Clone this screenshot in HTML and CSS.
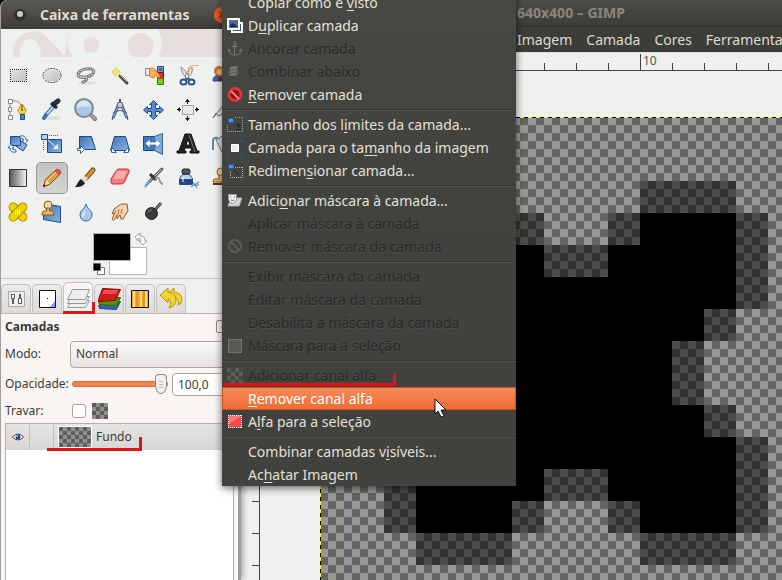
FILE: index.html
```html
<!DOCTYPE html>
<html lang="pt-BR">
<head>
<meta charset="utf-8">
<title>Caixa de ferramentas</title>
<link rel="stylesheet" href="styles.css">
</head>
<body>
<svg class="defs" aria-hidden="true">
  <defs>
    <linearGradient id="blue" x1="0" y1="0" x2="1" y2="1"><stop offset="0" stop-color="#3f74b8"/><stop offset="1" stop-color="#8ab4e2"/></linearGradient>
    <linearGradient id="grey" x1="0" y1="0" x2="1" y2="1"><stop offset="0" stop-color="#e4e8e6"/><stop offset="1" stop-color="#b9bdbb"/></linearGradient>
    <linearGradient id="ramp"><stop offset="0" stop-color="#555"/><stop offset="1" stop-color="#f4f4f4"/></linearGradient>
    <pattern id="check4" width="8" height="8" patternUnits="userSpaceOnUse"><path fill="#8f8f8d" d="M0 0h8v8H0z"/><path fill="#5d5d5b" d="M0 0h4v4H0zM4 4h4v4H4z"/></pattern>
  </defs>
</svg>
<div class="desktop">
  <section class="toolbox">
    <header class="titlebar">
      <svg width="16" height="16"><circle cx="8" cy="8" r="6" fill="#32312e"/><circle cx="8" cy="7" r="3" fill="#cfccc4"/></svg>
      <h1>Caixa de ferramentas</h1>
      <button class="close" aria-label="Fechar">×</button>
    </header>
    <svg class="wilber" viewBox="0 0 236 28" preserveAspectRatio="xMinYMin slice">
      <path fill="#e6dfde" d="M12 28V21C13 11 21 2 33 2c12 0 18 9 25 15 5-3 8-10 9-15l3-2h166v28z"/>
      <path fill="#eff1ef" d="M19 28c-1-9 3-18 10-18s12 9 10 18zM36 2c11 2 20 14 30 0l-3 26c-13-3-18-15-27-26"/>
      <path fill="#e6dfde" d="M32 2c13-1 22 18 34 26H48C42 17 36 8 32 2"/>
      <circle cx="89" cy="12" r="23" fill="#eff1ef"/><circle cx="90" cy="16" r="8" fill="#e6dfde"/>
      <circle cx="133" cy="15" r="27" fill="#eff1ef"/><circle cx="139" cy="17" r="13" fill="#e6dfde"/>
    </svg>
    <div class="tools">
      <button aria-label="Seleção retangular"><svg viewBox="0 0 24 24" shape-rendering="crispEdges"><path fill="url(#grey)" stroke="#fff" d="M4.500 5.500h16v12h-16z"/><path fill="none" stroke="#111" stroke-dasharray="1 1" d="M4 5.500h17M4 17.500h17M4.500 5v13M20.500 5v13"/></svg></button>
      <button aria-label="Seleção elíptica"><svg viewBox="0 0 24 24"><ellipse cx="12" cy="11.500" rx="9" ry="7" fill="url(#grey)" stroke="#fff" stroke-width="2"/><ellipse cx="12" cy="11.500" rx="9" ry="7" fill="none" stroke="#222" stroke-dasharray="2 1"/></svg></button>
      <button aria-label="Seleção livre"><svg viewBox="0 0 24 24"><ellipse cx="13" cy="19" rx="9" ry="2" fill="#0001"/><g fill="none" stroke="#777" stroke-width="3"><ellipse cx="12" cy="9" rx="8" ry="4" transform="rotate(-13 12 9)"/><path d="M5 11c-2 3 5 1 7 3s-3 4-4 5"/></g><g fill="none" stroke="#ddd" stroke-dasharray="2 1"><ellipse cx="12" cy="9" rx="8" ry="4" transform="rotate(-13 12 9)"/><path d="M5 11c-2 3 5 1 7 3s-3 4-4 5"/></g></svg></button>
      <button aria-label="Seleção contígua"><svg viewBox="0 0 24 24"><circle cx="8" cy="8" r="4" fill="#f6dc6a" opacity=".6"/><path fill="#fbeb8c" stroke="#e8c84a" stroke-width=".5" d="M8 3l1 4 4 1-4 1-1 4-1-4-4-1 4-1z"/><path stroke="#45443f" stroke-width="3" stroke-linecap="round" d="M12 12l7 7"/><path stroke="#b4b3a6" d="M12 11l7 7"/></svg></button>
      <button aria-label="Seleção por cor"><svg viewBox="0 0 24 24"><path fill="#729fcf" stroke="#204a87" d="M15.500 2.500h6v6h-6z"/><path fill="#3465a4" d="M17 4h3v3h-3z"/><path fill="#ef2929" stroke="#a40000" d="M15.500 8.500h6v6h-6z"/><path fill="#73d216" stroke="#3c7a06" d="M15.500 14.500h6v6h-6z"/><path fill="#fbb45c" stroke="#d57a0c" d="M7 5c3-2 7 0 8 3l3 4-1 2-4-3-1 3-3-1-3-2z"/><path fill="#eee" stroke="#888" d="M3.500 4.500h4v7h-4z"/></svg></button>
      <button aria-label="Tesoura"><svg viewBox="0 0 24 24"><path fill="#ddd" stroke="#777" stroke-width=".8" d="M5 3c0 5 3 9 7 12l1-2C11 9 8 5 5 3zM16 3c1 5-1 9-6 12l-1-2c1-4 4-8 7-10z"/><g fill="none" stroke="#2a5596" stroke-width="2"><ellipse cx="7.500" cy="18" rx="3" ry="2.500"/><ellipse cx="15.500" cy="18" rx="3" ry="2.500"/></g><path stroke="#3465a4" stroke-width="2" d="M9 15h5"/><path fill="none" stroke="#d9902c" stroke-dasharray="2 1" d="M12.500 11V5q0-3 3-3.500H23"/></svg></button>
      <button aria-label="Seleção de frente"><svg viewBox="0 0 24 24"><path fill="#3c68ac" stroke="#254b86" d="M3 17q0-5 5-6h9v6z"/><circle cx="9" cy="7" r="5" fill="#c27c23"/><circle cx="10" cy="8" r="3" fill="#f3b469"/><path fill="#7c2630" d="M8 13h6v4H8z"/></svg></button>

      <button aria-label="Vetores"><svg viewBox="0 0 24 24"><path fill="none" stroke="#888" d="M4 4c6-3 11 0 12 6M4 3v18"/><g fill="#fff" stroke="#888"><path d="M2.500 1.500h4v4h-4zM2.500 17.500h4v4h-4zM2.500 9.500h3v4h-3z"/></g><path fill="#f6dc4c" stroke="#b18609" d="M16 6l4 6c0 2-2 4-2 4h-4s-2-2-2-4z"/><circle cx="16" cy="12" r="1" fill="#765b00"/><path stroke="#765b00" d="M16 7v5"/><path fill="#4a80c4" stroke="#204a87" d="M14.500 16.500h4v5h-4z"/></svg></button>
      <button aria-label="Seletor de cores"><svg viewBox="0 0 24 24"><ellipse cx="13" cy="20" rx="8" ry="2" fill="#0001"/><path stroke="#3f6fae" stroke-width="4" stroke-linecap="round" d="M13 9l-7 8-2 3"/><path stroke="#b9d2f0" stroke-width="2" d="M13 9l-6 7"/><path stroke="#28313f" stroke-width="5" stroke-linecap="round" d="M14 6l4-3"/><path stroke="#1d2637" stroke-width="3" d="M11 5l6 5"/></svg></button>
      <button aria-label="Zoom"><svg viewBox="0 0 24 24"><path stroke="#777" stroke-width="4" stroke-linecap="round" d="M16 16l5 5"/><path stroke="#ddd" stroke-dasharray="1 1" stroke-width="2" d="M16 16l5 5"/><circle cx="10" cy="10" r="9" fill="#a9c8ec" stroke="#85888a" stroke-width="2"/><path fill="#d6e5f6" d="M3 10a7 7 0 0114-1q-7-2-14 1"/></svg></button>
      <button aria-label="Medida"><svg viewBox="0 0 24 24"><path fill="none" stroke="#3b6ba8" stroke-width="3" d="M10 8L5 20M14 8l5 12"/><path fill="none" stroke="#9cbbe2" d="M10 9L5 19M14 9l5 10"/><path fill="none" stroke="#555" d="M5 15q7-5 14 0"/><path stroke="#555" stroke-width="2" d="M12 1v5"/><circle cx="12" cy="7" r="3" fill="#ccc" stroke="#555"/><path stroke="#444" d="M4 22l1-3M20 22l-1-3"/></svg></button>
      <button aria-label="Mover"><svg viewBox="0 0 24 24"><path fill="#568bce" stroke="#204a87" d="M11.500 2.500l4 4h-2v4h4v-2l4 3.500-4 3.500v-2h-4v4h2l-4 4-4-4h2v-4h-4v2l-4-3.500 4-3.500v2h4v-4h-2z"/></svg></button>
      <button aria-label="Alinhamento"><svg viewBox="0 0 24 24"><path fill="#e9ebe9" stroke="#a3a5a3" d="M6.500 7.500h11v9h-11z"/><path stroke="#111" d="M11.500 1v5M11.500 18v5M1 11.500h4M19 11.500h4"/><path fill="#111" d="M9 4l2.500-3L14 4zM9 20l2.500 3 2.500-3zM4 9l-3 2.500L4 14zM20 9l3 2.500L20 14z"/></svg></button>
      <button aria-label="Cortar"><svg viewBox="0 0 24 24"><path fill="#e2e3e0" stroke="#666" d="M3 20L15 5v10l-7 3-2-3z"/></svg></button>

      <button aria-label="Rotacionar"><svg viewBox="0 0 24 24"><path fill="#87aede" stroke="#204a87" d="M4 10l13 9 4-6-11-7z"/><path fill="url(#blue)" stroke="#204a87" d="M4.500 4.500h10v9h-10z"/><path fill="#fff" stroke="#3465a4" d="M14 4q6-1 6 4h2l-3 4-3-4h2q0-2-4-2zM10 20q-6 1-6-4H2l3-4 3 4H6q0 2 4 2z"/></svg></button>
      <button aria-label="Redimensionar"><svg viewBox="0 0 24 24"><path fill="url(#blue)" stroke="#204a87" d="M7.500 7.500h14v13h-14z"/><path fill="none" stroke="#3465a4" stroke-dasharray="1 1" d="M9 3.500h9M3.500 9v10"/><path fill="#b7d0ef" stroke="#204a87" d="M1.500 2.500h6v5h-6z"/><path stroke="#fff" d="M8 8l9 8"/><path fill="#fff" d="M18 12v5h-5z"/></svg></button>
      <button aria-label="Inclinar"><svg viewBox="0 0 24 24"><path fill="url(#blue)" stroke="#204a87" d="M5.500 4.500h12l4 13h-16z"/><path fill="#fff" stroke="#3465a4" d="M3.500 16.500h3v-3l4 4-4 4v-3h-3z"/></svg></button>
      <button aria-label="Perspectiva"><svg viewBox="0 0 24 24"><path fill="url(#blue)" stroke="#204a87" d="M6.500 4.500h11l4 14h-19z"/><g fill="#fff" stroke="#3465a4"><path d="M3.500 15.500l5 5h-5zM20.500 15.500l-5 5h5z"/></g></svg></button>
      <button aria-label="Espelhar"><svg viewBox="0 0 24 24"><path fill="#4378bb" stroke="#204a87" d="M1.500 4.500h11v14h-11z"/><path fill="#82abdc" stroke="#3465a4" d="M12.500 4.500l8-3v21l-8-4z"/><path fill="#fff" stroke="#3465a4" stroke-width=".7" d="M3 11.500L8 7v3h6V7l5 4.500-5 4.500v-3H8v3z"/></svg></button>
      <button aria-label="Texto"><svg viewBox="0 0 24 24"><path fill="#222" stroke="#111" fill-rule="evenodd" d="M9 2h6l6 17h2v2h-9v-2h2l-1-3H9l-1 3h2v2H1v-2h2zM12 7l-2 6h4z"/><path stroke="#777" d="M13 3l6 17"/></svg></button>
      <button aria-label="Preenchimento"><svg viewBox="0 0 24 24"><path fill="#ddd" stroke="#777" d="M6 8l8-5 6 10-8 7z"/><path fill="none" stroke="#5e83b4" stroke-width="2" d="M3 18V8q1-3 5-2"/></svg></button>

      <button aria-label="Degradê"><svg viewBox="0 0 24 24"><path fill="url(#ramp)" stroke="#333" d="M3.500 3.500h17v17h-17z"/></svg></button>
      <button class="selected" aria-label="Lápis"><svg viewBox="0 0 24 24"><path fill="#e0a04c" stroke="#87510c" d="M3.500 20.500l2-7 11-10 4 4-11 11z"/><path fill="#f6d6a0" d="M4.500 19.500l2-6 3 4z"/><path fill="#e55" stroke="#933" stroke-width=".6" d="M15 5l2-2q4 0 4 4l-2 2z"/><path fill="#222" d="M3 21l1-3 2 2z"/><path stroke="#ffd48d" d="M8 14l8-8"/></svg></button>
      <button aria-label="Pincel"><svg viewBox="0 0 24 24"><path stroke="#81490e" stroke-width="5" stroke-linecap="round" d="M19 4l-7 8"/><path stroke="#d6903d" stroke-width="3" stroke-linecap="round" d="M19 4l-6 7"/><path stroke="#ddd" stroke-width="5" d="M12 11l-3 4"/><path fill="#222" d="M7 13l4 4c-2 4-6 4-10 4 2-2 3-6 6-8"/></svg></button>
      <button aria-label="Borracha"><svg viewBox="0 0 24 24"><path fill="#f27c7c" stroke="#cf2f32" d="M3 13l5-8q1-2 3-2h8q3 0 2 3l-4 9q-1 3-4 3H5q-2 0-2-2z"/><path fill="#f8aaaa" d="M5 13l4-8h10l-4 8z"/></svg></button>
      <button aria-label="Aerógrafo"><svg viewBox="0 0 24 24"><path stroke="#555" stroke-width="3" stroke-linecap="round" d="M20 3L8 15"/><path stroke="#ccc" d="M20 3L7 16"/><path stroke="#333" stroke-width="3" d="M8 8l6 6"/><path fill="none" stroke="#999" stroke-width="2" d="M13 13c6-5 3 5 8 5"/><path fill="#6897d4" d="M7 14l2 2-6 6q-2-2 4-8"/></svg></button>
      <button aria-label="Tinta"><svg viewBox="0 0 24 24"><rect x="6" y="3" width="8" height="5" rx="2" fill="#555" stroke="#222"/><path fill="#bcd3ee" stroke="#274d83" d="M6.500 8.500h7l3 4v6h-13v-6z"/><path fill="#204a87" d="M4 13h12v5H4z"/><path stroke="#fff" d="M7 11v5"/><path stroke="#3d6ba7" d="M15 21l8-5M17 16l4 6M20 19h3"/></svg></button>
      <button aria-label="Clonar"><svg viewBox="0 0 24 24"><circle cx="11" cy="6" r="4" fill="#f0d6a1" stroke="#8f5902"/><path fill="#e4b868" stroke="#8f5902" d="M9 9v4H5q-2 0-2 3h17v-3h-7V9z"/><path fill="#513712" d="M3 17h17v2H3z"/></svg></button>

      <button aria-label="Restauração"><svg viewBox="0 0 24 24"><g stroke="#b08c00" fill="#edd400"><rect x="1" y="8" width="22" height="8" rx="4" transform="rotate(45 12 12)"/><rect x="1" y="8" width="22" height="8" rx="4" transform="rotate(-45 12 12)"/></g><path stroke="#fff29a" stroke-width="5" stroke-dasharray="1 1" d="M9 12h6"/></svg></button>
      <button aria-label="Clonar em perspectiva"><svg viewBox="0 0 24 24"><path fill="url(#blue)" stroke="#204a87" d="M3.500 13.500L12 5l8.500 1.500v16l-17-3z"/><circle cx="8" cy="5" r="4" fill="#f0d6a1" stroke="#8f5902"/><path fill="#e4b868" stroke="#8f5902" d="M6.500 8v3H4q-2 0-2 4h12q0-4-2-4H9.500V8z"/></svg></button>
      <button aria-label="Desfocar"><svg viewBox="0 0 24 24"><path fill="#a9c7ec" stroke="#3465a4" d="M12 4c1 5 6 6 6 11a6 6 0 01-12 0c0-5 5-6 6-11"/><path fill="#deebf9" d="M11 9c0 4-4 4-3 8 2 1 4-3 3-8"/></svg></button>
      <button aria-label="Borrar"><svg viewBox="0 0 24 24"><path fill="#f5d3b2" stroke="#9b5a25" d="M19 4l-6 0-7 5-2 5 3-1-3 6q1 3 3 0l2-4v4l3-4 1 4q3 1 3-2l4-6z"/><path fill="none" stroke="#bb7538" d="M8 10l-2 5M11 9l-1 6M14 9l-1 5"/></svg></button>
      <button aria-label="Subexposição"><svg viewBox="0 0 24 24"><path stroke="#444" stroke-width="3" d="M12 11l7-8"/><path stroke="#999" d="M13 10l6-7"/><circle cx="9.500" cy="13.500" r="6" fill="#3a3a3a" stroke="#222"/><path fill="#666" d="M5 13q1-4 5-4-1 3-5 4"/></svg></button>
    </div>
    <button class="colours" aria-label="Cores de frente e fundo"><svg width="56" height="44" viewBox="0 0 56 44"><path fill="#fff" stroke="#b9b3b1" d="M16.500 14.500h37v27h-37z"/><path fill="#000" stroke="#b9b3b1" d="M.5.5h37v27H.5z"/><path fill="#fff" stroke="#777" d="M4.500 34.500h7v7h-7z"/><path fill="#000" stroke="#666" d="M.5 30.500h7v7h-7z"/><path fill="#fff" stroke="#888" stroke-width=".8" d="M42 4l5-4v3q5 0 5 5h2l-4 4-4-4h2q0-3-3-3v3z"/></svg></button>
    <div class="dock">
      <nav class="tabs">
        <button aria-label="Opções"><svg viewBox="0 0 24 24"><path fill="#eee" stroke="#aaa" d="M4.500 4.500h16v15h-16z"/><path fill="#fff" stroke="#555" d="M7.500 7.500h3v4h-3zM14.500 11.500h3v5h-3z"/><path stroke="#555" stroke-width="2" d="M9 12v5M16 7v4"/></svg></button>
        <button aria-label="Pincéis"><svg viewBox="0 0 24 24"><path fill="#fff" stroke="#111" d="M4.500 3.500h16v17h-16z"/><path fill="#89f" d="M20 14v6h-5z"/><path d="M12 11h1v1h-1z"/></svg></button>
        <button class="active" aria-label="Camadas"><svg viewBox="0 0 24 24"><g fill="#eee" stroke="#999"><path d="M1.500 21.500l4-7h18l-4 7z"/><path d="M1.500 17.500l4-7h18l-4 7z"/><path d="M1.500 13.500l5-10h17l-4 10z"/></g></svg></button>
        <button aria-label="Canais"><svg viewBox="0 0 24 24"><path fill="#3465a4" stroke="#204a87" d="M1.500 18.500l4-4h18l-4 8-17-1z"/><path fill="#4e9a06" stroke="#2e6b00" d="M1.500 14.500l4-4h18l-4 8-17-1z"/><path fill="#cc1c1c" stroke="#900" d="M1.500 12.500l4-11 18 1-5 11-17 1z"/><path fill="#e85050" d="M7 3h14l-2 4H5z"/></svg></button>
        <button aria-label="Vetores"><svg viewBox="0 0 24 24"><path fill="#f6a832" stroke="#111" d="M3.500 3.500h17v17h-17z"/><path stroke="#ffdd83" stroke-width="2" d="M6 4v16M13 4v16M18 4v16"/><path stroke="#e47900" d="M9 4v16M16 4v16"/></svg></button>
        <button aria-label="Histórico"><svg viewBox="0 0 24 24"><g fill="#f3d332" stroke="#b59308"><path d="M7 8l8-7v4q8 1 8 8 0 4-4 5 2-7-4-7v4z"/><path d="M1 8l8-7v4q8 1 8 8 0 6-7 8 4-7-1-9v4z"/></g></svg></button>
      </nav>
      <div class="panel">
        <div class="row heading"><h2>Camadas</h2><button class="fold" aria-label="Menu">◂</button></div>
        <div class="row"><label for="mode">Modo:</label><select id="mode"><option>Normal</option></select></div>
        <div class="row"><label for="op">Opacidade:</label><input id="op" type="range" value="100"><input class="num" type="text" value="100,0" aria-label="Opacidade em porcentagem"></div>
        <div class="row lock"><label for="lock">Travar:</label><input id="lock" type="checkbox"><svg width="16" height="16"><path fill="url(#check4)" d="M0 0h16v16H0z"/></svg></div>
        <div class="layers">
          <div class="layer">
            <span class="eye"><svg width="12" height="10"><path fill="#fff" stroke="#444" d="M.5 5Q6-1 11.500 5 6 11 .5 5"/><circle cx="6" cy="5" r="2.500" fill="#204a87"/><circle cx="5" cy="4" r="1" fill="#9bf"/></svg></span><span class="chain"></span>
            <svg class="thumb" width="32" height="20"><path fill="url(#check4)" d="M0 0h32v20H0z"/></svg>
            <span>Fundo</span>
          </div>
        </div>
      </div>
    </div>
  </section>

  <section class="image-window">
    <header class="image-title">640x400 – GIMP</header>
    <nav class="menubar"><a href="#">Imagem</a><a href="#">Camada</a><a href="#">Cores</a><a href="#">Ferramentas</a></nav>
    <div class="workspace">
      <div class="corner"></div>
      <svg class="ruler-h"><defs><pattern id="th" x="28" width="32" height="18" patternUnits="userSpaceOnUse"><path fill="#444" d="M0 10h1v8H0z"/></pattern></defs><rect width="100%" height="18" fill="url(#th)"/><path fill="#444" d="M380 1h1v17h-1z"/><text x="383" y="12">10</text></svg>
      <svg class="ruler-v"><defs><pattern id="tv" y="14" width="19" height="32" patternUnits="userSpaceOnUse"><path fill="#444" d="M11 0h8v1h-8z"/></pattern></defs><rect width="19" height="100%" fill="url(#tv)"/></svg>
      <div class="viewport">
        <svg class="canvas">
          <defs>
            <pattern id="check8" width="16" height="16" patternUnits="userSpaceOnUse"><path fill="#646462" d="M0 0h16v16H0z"/><path fill="#989896" d="M0 0h8v8H0zM8 8h8v8H8z"/></pattern>
          </defs>
          <rect width="100%" height="100%" fill="url(#check8)"/>
          <!-- soft edge of the brush stroke -->
          <path fill="#000" fill-opacity=".5" d="M96 64h96v32h32v32h64V96h32V64h96v32h32v96h-32v32h-32v64h32v32h32v96h-32v32h-96v-32h-32v-32h-64v32h-32v32H96v-32H64V96h32z"/>
          <path d="M96 96h96v32h32v32h64v-32h32V96h96v96h-32v32h-32v64h32v32h32v96h-96v-32h-32v-32h-64v32h-32v32H96z"/>
          <path stroke="#000" d="M0 .5h1200M.5 0v1200"/><path stroke="#ff0" stroke-dasharray="4 4" d="M0 .5h1200M.5 0v1200"/>
        </svg>
      </div>
    </div>
  </section>

  <div class="menu" role="menu">
    <button role="menuitem"><i></i>Copiar como é <u>v</u>isto</button>
    <button role="menuitem"><svg viewBox="0 0 16 16"><path fill="#3b4f7c" stroke="#fff" stroke-width="2" d="M5 5h10v9H5z"/><path fill="#4c6ba2" stroke="#fff" stroke-width="2" d="M1 1h11v10H1z"/><path fill="#1b2d50" d="M3 7l3-2 5 4H3z"/></svg>D<u>u</u>plicar camada</button>
    <button role="menuitem" disabled><svg viewBox="0 0 16 16"><g fill="none" stroke="#777773"><circle cx="8" cy="2.500" r="1.500"/><path d="M7.500 4v10M5 5.500h6M2 9q0 5 6 5t6-5M1 10l1-2 2 2M12 10l2-2 1 2"/></g></svg>Ancorar camada</button>
    <button role="menuitem" disabled><svg viewBox="0 0 16 16"><g fill="#777773" stroke="#444440" stroke-width=".6"><path d="M1 12l3-4h8l-3 4z"/><path d="M1 9l3-4h8L9 9z"/><path d="M1 6l3-4h8L9 6z"/></g></svg>Combinar abaixo</button>
    <button role="menuitem"><svg viewBox="0 0 16 16"><circle cx="8" cy="7.500" r="6" fill="#8a1414" stroke="#d9383b" stroke-width="3"/><path stroke="#f08080" stroke-width="2" d="M4 4l8 8"/></svg><u>R</u>emover camada</button>
    <hr>
    <button role="menuitem"><svg viewBox="0 0 16 16" shape-rendering="crispEdges"><path fill="none" stroke="#999" stroke-dasharray="1 1" d="M8 .5h8M15.500 1v14M0 14.500h16M.5 8v6"/><path fill="#5b92dc" stroke="#245ba8" d="M1.500 1.500h5v4h-5z"/><path stroke="#222" d="M9 8.500h5M11.500 6v5M9 12.500h5"/></svg>Tamanho dos l<u>i</u>mites da camada...</button>
    <button role="menuitem"><svg viewBox="0 0 16 16"><path fill="#eee" stroke="#fff" d="M4.500 4.500h7v7h-7z"/><path fill="#245ba8" d="M0 0h3L0 3zM16 0h-3l3 3zM0 16h3l-3-3zM16 16h-3l3-3z"/></svg>Camada para o ta<u>m</u>anho da imagem</button>
    <button role="menuitem"><svg viewBox="0 0 16 16" shape-rendering="crispEdges"><path fill="none" stroke="#bbb" stroke-dasharray="1 1" d="M8 4.500h8M15.500 4v11M3 14.500h13M3.500 8v7"/><path fill="#5b92dc" stroke="#245ba8" d="M1.500 1.500h5v4h-5z"/><path stroke="#222" d="M7 7l5 5"/></svg>Redimen<u>s</u>ionar camada...</button>
    <hr>
    <button role="menuitem"><svg viewBox="0 0 16 16"><path fill="#d5d5d2" stroke="#aaa" d="M1 13l3-8h11l-3 8z"/><path fill="#eee" stroke="#999" d="M1.500 1.500h8v5q-1 4-4 4t-4-4z"/><path fill="none" stroke="#666" d="M3 4h1M7 4h1M4 7q2 1 3 0"/></svg>Adici<u>o</u>nar máscara à camada...</button>
    <button role="menuitem" disabled><i></i>Aplicar máscara à camada</button>
    <button role="menuitem" disabled><svg viewBox="0 0 16 16"><circle cx="8" cy="7" r="6" fill="none" stroke="#5c5c58" stroke-width="2"/><path stroke="#5c5c58" stroke-width="2" d="M4 3l8 8"/></svg>Remover máscara da camada</button>
    <hr>
    <button role="menuitem" disabled><i></i>Exibir máscara da camada</button>
    <button role="menuitem" disabled><i></i>Editar máscara da camada</button>
    <button role="menuitem" disabled><i></i>Desabilita a máscara da camada</button>
    <button role="menuitem" disabled><svg viewBox="0 0 16 16" shape-rendering="crispEdges"><path fill="#585855" d="M1 1h14v14H1z"/><path stroke="#888884" stroke-dasharray="1 1" d="M1 1.500h14M1 14.500h14M1.500 1v14M14.500 1v14"/></svg>Máscara para a seleção</button>
    <hr>
    <button role="menuitem" disabled><svg viewBox="0 0 16 16"><path fill="#5b5b58" d="M0 0h16v16H0z"/><path fill="#444441" d="M4 0h4v4H4zM12 0h4v4h-4zM0 4h4v4H0zM8 4h4v4H8zM4 8h4v4H4zM12 8h4v4h-4zM0 12h4v4H0zM8 12h4v4H8z"/></svg>Adicionar canal alfa</button>
    <button role="menuitem" class="hover"><i></i><u>R</u>emover canal alfa</button>
    <button role="menuitem"><svg viewBox="0 0 16 16" shape-rendering="crispEdges"><path fill="#f4484c" d="M1 1h14v13H1z"/><path fill="#f97a7e" d="M2 2h12L2 10z"/><path stroke="#fff" stroke-dasharray="1 1" d="M1 1.500h14M1 13.500h14M1.500 1v13M14.500 1v13"/></svg>A<u>l</u>fa para a seleção</button>
    <hr>
    <button role="menuitem"><i></i>Combinar camadas v<u>i</u>síveis...</button>
    <button role="menuitem"><i></i>Ac<u>h</u>atar Imagem</button>
  </div>

  <div class="mark mark-tab"></div>
  <div class="mark mark-layer"></div>
  <div class="mark mark-alpha"></div>
  <svg class="pointer" width="14" height="21" viewBox="0 0 14 21"><path fill="#fff" stroke="#111" d="M1 1v15l3-3 3 6 3-1-3-6h5z"/></svg>
</div>
</body>
</html>
```
FILE: styles.css
```css
* { box-sizing: border-box; }
body {
  margin: 0;
  background: #000;
  font: 12px/16px "Noto Sans", "Open Sans", sans-serif;
  color: #3c3b37;
}
button, input, select { font: inherit; color: inherit; }
button { padding: 0; border: 0; background: none; }
svg { display: block; flex: none; }
.defs { position: absolute; width: 0; height: 0; }

.desktop {
  position: relative;
  display: flex;
  height: 100vh;
  overflow: hidden;
}

/* toolbox window */
.toolbox {
  position: relative;
  z-index: 1;
  display: flex;
  flex-direction: column;
  flex: none;
  width: 241px;
  border: solid #a39e9c;
  border-width: 0 3px 0 1px;
  border-radius: 7px 0 0 0;
  background: #eff1ef;
  box-shadow: 1px 0 7px rgba(0, 0, 0, 0.4);
  overflow: hidden;
}
.titlebar {
  display: flex;
  align-items: center;
  gap: 12px;
  height: 29px;
  flex: none;
  padding: 0 8px 0 11px;
  background: linear-gradient(#5b5a54, #3c3b37);
  color: #dfdbd2;
}
.titlebar h1 { flex: 1; margin: 0; font-size: 14px; line-height: 20px; white-space: nowrap; }
.close {
  flex: none;
  width: 16px;
  height: 16px;
  border-radius: 50%;
  background: #e95420;
  color: #5b2410;
  font-size: 14px;
  line-height: 16px;
}
.wilber { width: 100%; height: 28px; flex: none; }
.tools {
  display: grid;
  grid-template-columns: repeat(7, 34px);
  grid-auto-rows: 34px;
  padding-top: 2px;
}
.tools button {
  display: grid;
  place-items: center;
  margin: 1px;
  border: 1px solid transparent;
  border-radius: 5px;
}
.tools svg { width: 24px; height: 24px; }
.tools .selected { border-color: #9b9895; background: linear-gradient(#c2c3c1, #d4d5d3); }
.colours { align-self: flex-start; margin: 4px 0 1px 92px; }

.dock {
  display: flex;
  flex-direction: column;
  flex: 1;
  border-top: 1px solid #c9c5c3;
}
.tabs {
  display: flex;
  align-items: flex-end;
  gap: 1px;
  height: 35px;
  border-bottom: 1px solid #bab4b2;
}
.tabs button {
  display: grid;
  place-items: center;
  width: 30px;
  height: 29px;
  border: 1px solid #c3bebc;
  border-bottom: 0;
  border-radius: 5px 5px 0 0;
  background: linear-gradient(#ecebe9, #dddad8);
}
.tabs svg { width: 24px; height: 24px; }
.tabs .active { height: 31px; background: #f9f5f3; }

.panel {
  display: flex;
  flex-direction: column;
  flex: 1;
  padding: 0 4px;
  background: #f9f5f3;
}
.row { display: flex; align-items: center; height: 30px; gap: 4px; }
.heading { height: 25px; justify-content: space-between; }
h2 { margin: 0; font-size: 12px; line-height: 16px; }
.row label { width: 63px; flex: none; }
.fold { width: 14px; height: 13px; margin-right: 4px; border: 1px solid #888; border-radius: 2px; font-size: 9px; line-height: 10px; }
select {
  flex: 1;
  height: 27px;
  margin-left: -2px;
  padding: 0 5px;
  appearance: none;
  border: 1px solid #aaa5a3;
  border-radius: 4px;
  background: linear-gradient(#fbfaf9, #e7e4e2);
}
input[type="range"] {
  width: 96px;
  height: 20px;
  flex: none;
  margin: 0;
  appearance: none;
  background: none;
}
input[type="range"]::-webkit-slider-runnable-track {
  height: 6px;
  border: 1px solid #d5693c;
  border-radius: 3px;
  background: #f58452;
}
input[type="range"]::-webkit-slider-thumb {
  appearance: none;
  width: 12px;
  height: 20px;
  margin-top: -8px;
  border: 1px solid #8e8a88;
  border-radius: 4px 4px 6px 6px / 4px 4px 9px 9px;
  background: repeating-linear-gradient(#bbb 0 1px, transparent 1px 3px) center / 4px 7px no-repeat, #f2f0ee;
}
.num { width: 58px; height: 23px; padding: 0 5px; border: 1px solid #aaa5a3; border-radius: 4px; background: #fff; }
.lock { height: 24px; }
.lock svg { margin-left: 2px; }
input[type="checkbox"] { width: 14px; height: 14px; margin: 0; appearance: none; border: 1px solid #a5a09e; border-radius: 3px; background: #fff; }
.layers { flex: 1; border: 1px solid #b5b0ae; border-bottom: 0; background: #fff; }
.layer { display: flex; align-items: center; height: 26px; background: linear-gradient(#e5e4e2, #d8d7d5); }
.eye, .chain { display: grid; place-items: center; width: 24px; height: 26px; border-right: 1px solid #c4c2c0; }
.thumb { margin: 0 4px 0 4px; border: 1px solid #fff; width: 34px; height: 22px; }

/* image window */
.image-window {
  display: flex;
  flex-direction: column;
  flex: 1;
  min-width: 0;
  background: #eff1ef;
}
.image-title {
  height: 27px;
  flex: none;
  padding-left: 276px;
  border-bottom: 1px solid #31312e;
  background: linear-gradient(#4b4c46, #3c3d39);
  color: #8a867f;
  font-size: 14px;
  font-weight: bold;
  line-height: 26px;
  white-space: nowrap;
}
.menubar {
  display: flex;
  gap: 14px;
  height: 25px;
  flex: none;
  padding-left: 276px;
  background: #3c3d39;
  overflow: hidden;
}
.menubar a { color: #dfdbd2; font-size: 14px; line-height: 26px; text-decoration: none; }
.workspace {
  display: grid;
  grid-template: 18px 1fr / 19px 1fr;
  flex: 1;
  min-height: 0;
  border-top: 1px solid #e8dcda;
}
.ruler-h { width: 100%; height: 18px; border-bottom: 1px solid #444; }
.ruler-h text { font-size: 12px; fill: #555; }
.ruler-v { width: 19px; height: 100%; border-right: 1px solid #444; }
.viewport { display: flex; min-width: 0; padding: 46px 0 0 60px; overflow: hidden; }
.canvas { flex: 1; width: 100%; height: 100%; }

/* layer context menu */
.menu {
  position: absolute;
  z-index: 2;
  left: 222px;
  top: -9px;
  display: flex;
  flex-direction: column;
  width: 294px;
  background: linear-gradient(#464843, #41413e 50%, #41413e);
  box-shadow: 0 2px 8px rgba(0, 0, 0, 0.6);
}
.menu button {
  display: flex;
  align-items: center;
  height: 23px;
  padding: 0 5px;
  color: #e4e0d6;
  font-size: 14px;
  line-height: 20px;
  white-space: pre;
}
.menu button:disabled { color: #292927; text-shadow: 0 1px #4f4f4b; }
.menu u { text-underline-offset: 2px; }
.menu svg, .menu i { width: 16px; height: 16px; margin-right: 5px; flex: none; }
.menu hr { width: 100%; height: 7px; margin: 0; border: 0; background: linear-gradient(transparent 3px, #363633 3px 4px, #51524e 4px 5px, transparent 5px); }
.menu .hover { border: 1px solid #c9541f; padding: 0 4px; background: linear-gradient(#f78a58, #ef6c35); color: #fff; }

/* red highlights */
.mark { position: absolute; z-index: 3; border: solid #e01418; border-width: 0 3px 3px 0; }
.mark-tab { left: 63px; top: 302px; width: 32px; height: 12px; }
.mark-layer { left: 47px; top: 437px; width: 95px; height: 14px; }
.mark-alpha { left: 223px; top: 373px; width: 173px; height: 13px; }
.pointer { position: absolute; z-index: 3; left: 434px; top: 398px; }
```
